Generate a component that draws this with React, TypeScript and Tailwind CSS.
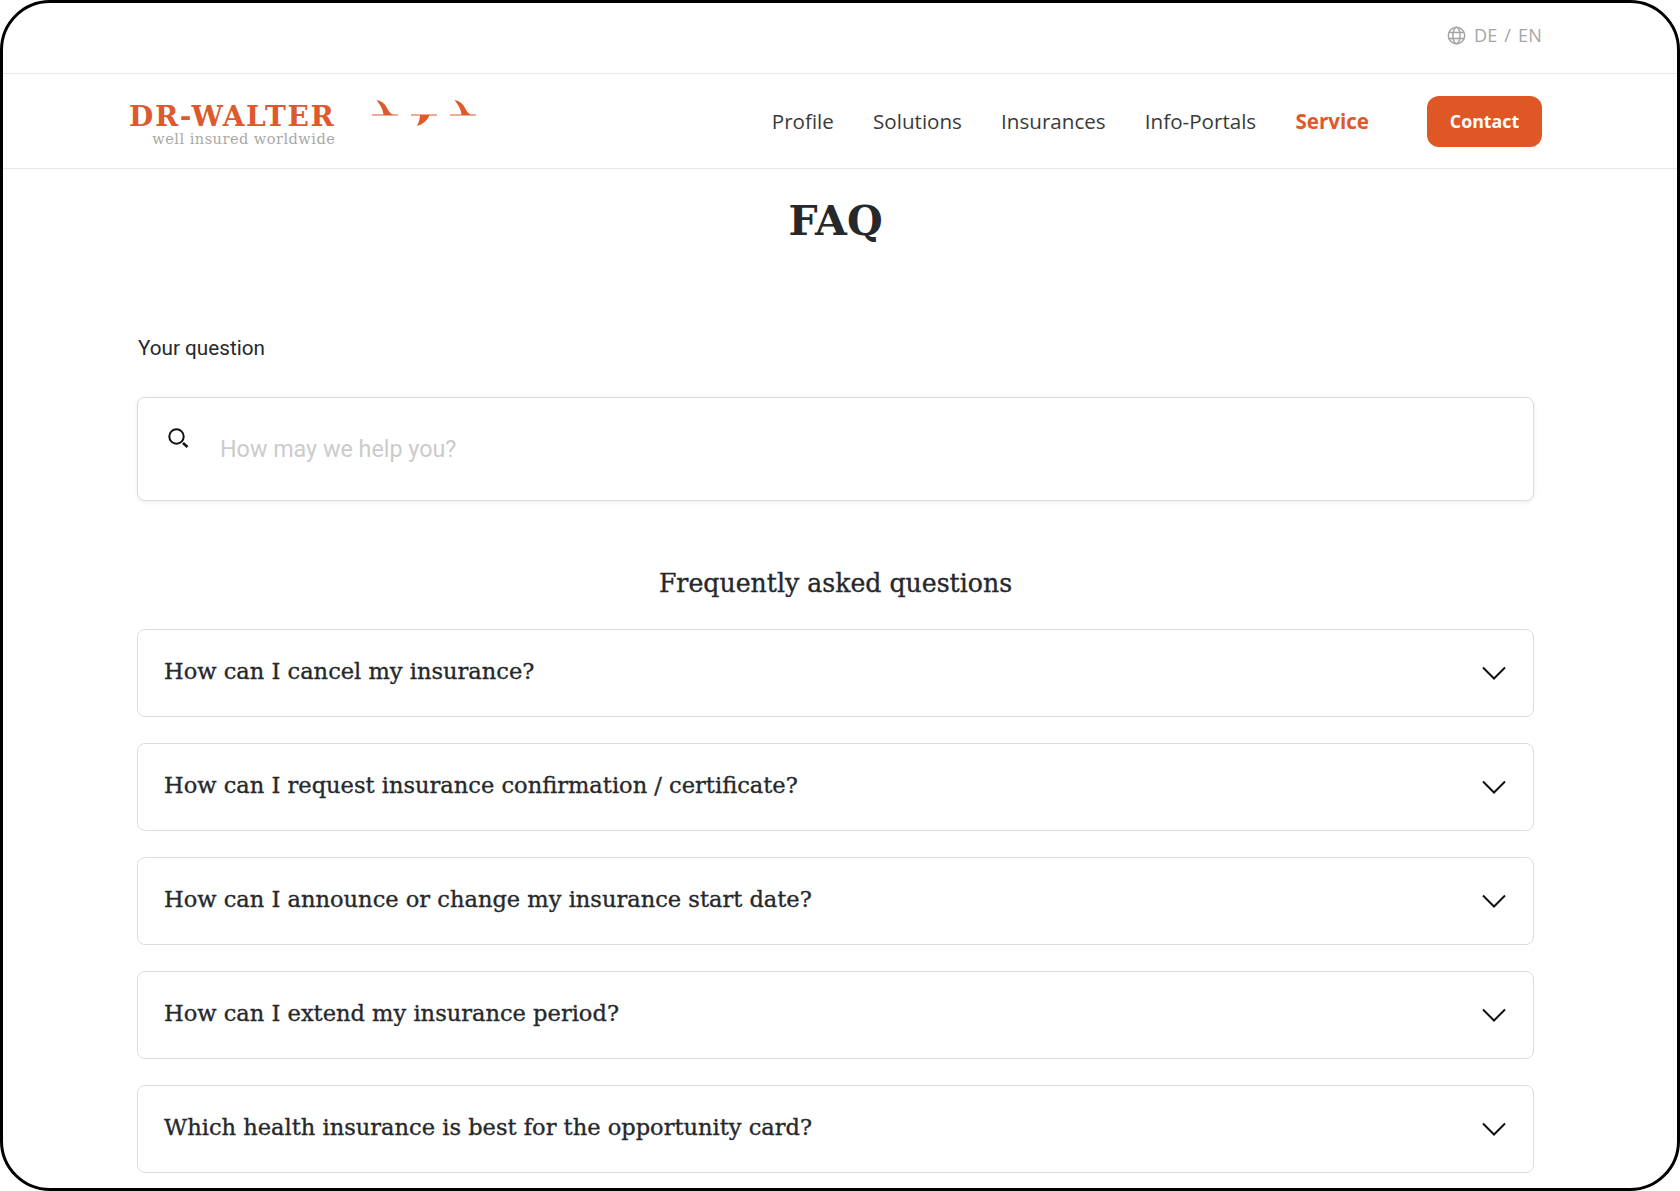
const serif = 'font-["DejaVu_Serif",serif]';

const questions = [
  'How can I cancel my insurance?',
  'How can I request insurance confirmation / certificate?',
  'How can I announce or change my insurance start date?',
  'How can I extend my insurance period?',
  'Which health insurance is best for the opportunity card?',
];

function Bird({ down }: { down?: boolean }) {
  return (
    <svg width="26" height="28" viewBox="0 0 26 28" fill="#e0592a">
      <path d="M0 14.5 H26 V15.5 H0 Z" />
      {down ? (
        <path d="M18.5 15 C17 20 12 24 6 26 C8 22 9 18 9 15 Z" />
      ) : (
        <path d="M4.5 0 C9.5 1 13 3.5 15 8 C16 10.5 18 13 21 15 H11.5 C11 9 8 4.5 4.5 0 Z" />
      )}
    </svg>
  );
}

function Globe() {
  return (
    <svg width="19" height="19" viewBox="0 0 19 19" fill="none" stroke="#a3a3a3" strokeWidth="1.5" className="mr-[8px]">
      <circle cx="9.5" cy="9.5" r="8.2" />
      <ellipse cx="9.5" cy="9.5" rx="3.6" ry="8.2" />
      <path d="M2 6.5 H17 M2 12.5 H17" />
    </svg>
  );
}

function Logo() {
  return (
    <div className="flex items-start">
      <div className="mt-[6px] flex flex-col items-end">
        <span className={`${serif} text-[28px] leading-[30px] font-bold tracking-[1.6px] text-[#dd5a2e]`}>DR-WALTER</span>
        <span className={`${serif} -mt-[1px] text-[14.5px] leading-[16px] tracking-[0.5px] text-[#a9a8a4]`}>well insured worldwide</span>
      </div>
      <div className="mt-[4px] ml-[37px] flex gap-[13px]">
        <Bird />
        <Bird down />
        <Bird />
      </div>
    </div>
  );
}

export default function App() {
  return (
    <div className="h-[1191px] overflow-hidden rounded-[50px] border-[3px] border-black bg-white font-['Open_Sans',sans-serif]">
      {/* Top bar */}
      <div className="flex h-[71px] items-center justify-end border-b border-[#e6e6e6] pr-[135px] pb-[5px]">
        <Globe />
        <span className="text-[18px] tracking-[0.2px] text-[#a6a6a6] [word-spacing:2px]">DE / EN</span>
      </div>

      {/* Nav */}
      <div className="flex h-[95px] items-center justify-between border-b border-[#e6e6e6] pr-[135px] pl-[126px]">
        <Logo />
        <div className="flex items-center">
          <nav className="flex gap-[39.2px] text-[20.6px] text-[#3a3a3a]">
            <a>Profile</a>
            <a>Solutions</a>
            <a>Insurances</a>
            <a>Info-Portals</a>
            <a className="font-bold text-[#e0592a]">Service</a>
          </nav>
          <button className="ml-[58px] h-[51px] w-[115px] rounded-[12px] bg-[#e05726] text-[17.8px] font-bold text-white">Contact</button>
        </div>
      </div>

      {/* Content */}
      <main className="ml-[134px] w-[1397px]">
        <h1 className={`${serif} mt-[25px] text-center text-[41px] leading-[54px] font-bold text-[#26282b]`}>FAQ</h1>

        <p className="mt-[87px] ml-[1px] font-['Roboto',sans-serif] text-[20.7px] leading-[26px] text-[#26282b]">Your question</p>

        <div className="mt-[36px] flex h-[104px] rounded-[8px] border border-[#dcdcdc] bg-white pl-[30px] shadow-[0_1px_4px_rgba(0,0,0,0.08)]">
          <svg width="21" height="21" viewBox="0 0 21 21" className="mt-[30px]" fill="none" stroke="#111" strokeWidth="2">
            <circle cx="8.5" cy="8.5" r="7.2" />
            <path d="M15 15 L19.5 19" strokeWidth="2.6" />
          </svg>
          <span className="mt-[33px] ml-[31px] font-['Roboto',sans-serif] text-[23.3px] leading-[36px] text-[#cbcbcb]">How may we help you?</span>
        </div>

        <h2 className={`${serif} mt-[66px] text-center text-[25.2px] leading-[34px] text-[#26282b] [-webkit-text-stroke:0.35px_#26282b]`}>Frequently asked questions</h2>

        <div className="mt-[28px] flex flex-col gap-[26px]">
          {questions.map(q => (
            <div key={q} className="flex h-[88px] items-center justify-between rounded-[8px] border border-[#dddddd] pr-[27px] pl-[26px]">
              <span className={`${serif} -mt-[3px] text-[22.55px] text-[#26282b] [-webkit-text-stroke:0.35px_#26282b]`}>{q}</span>
              <svg width="24" height="14" viewBox="0 0 24 14" fill="none" stroke="#111" strokeWidth="2">
                <path d="M1 1.5 L12 12.5 L23 1.5" />
              </svg>
            </div>
          ))}
        </div>
      </main>
    </div>
  );
}
